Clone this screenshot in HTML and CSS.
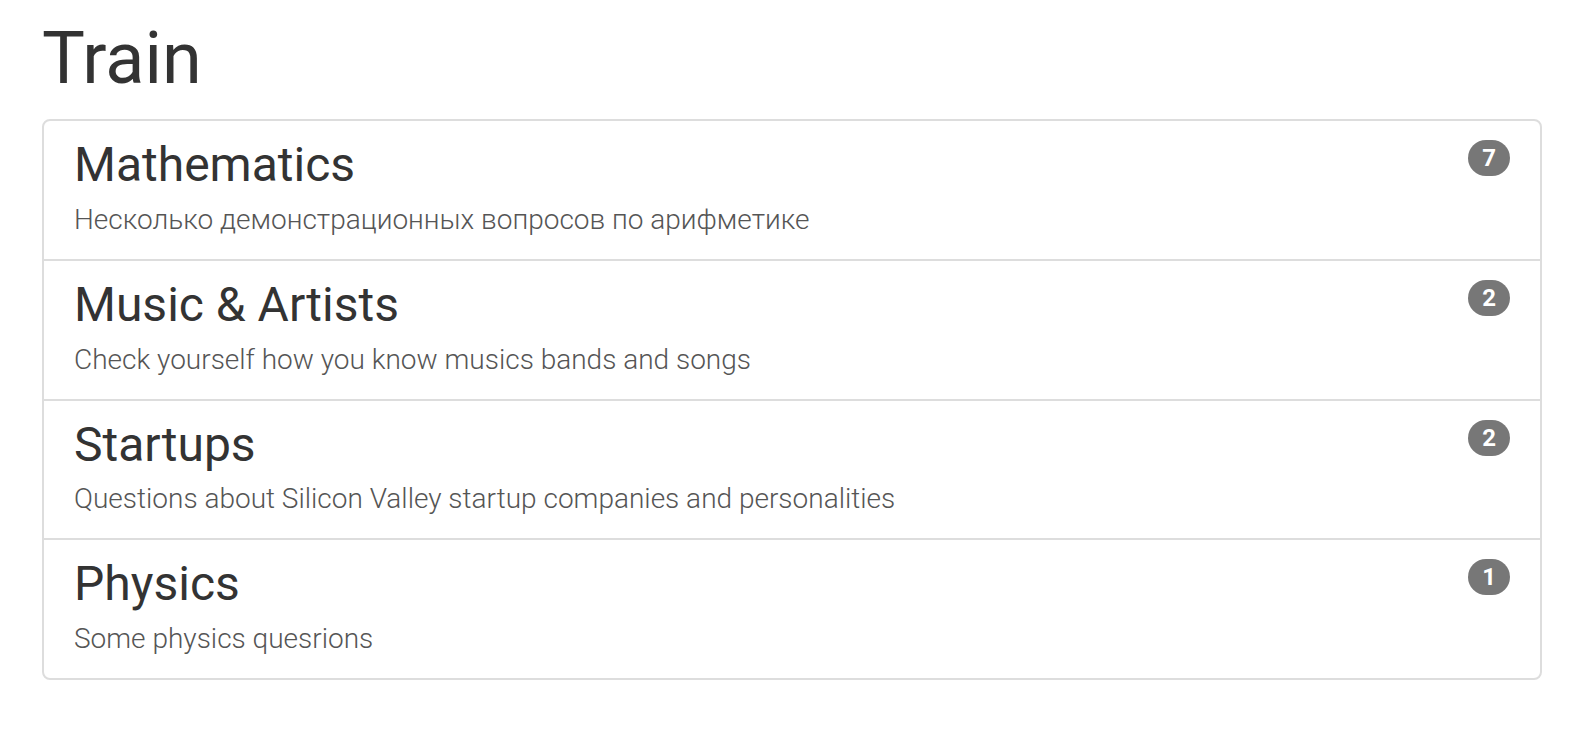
FILE: index.html
```html
<!DOCTYPE html>
<html lang="en">
<head>
<meta charset="utf-8">
<title>Train</title>
<link rel="stylesheet" href="styles.css">
</head>
<body>
<div class="page">
  <h1 class="page-title">Train</h1>
  <div class="list">
    <div class="item">
      <div class="item-head">
        <h3 class="item-title">Mathematics</h3>
        <span class="badge">7</span>
      </div>
      <p class="item-text">Несколько демонстрационных вопросов по арифметике</p>
    </div>
    <div class="item">
      <div class="item-head">
        <h3 class="item-title">Music &amp; Artists</h3>
        <span class="badge">2</span>
      </div>
      <p class="item-text">Check yourself how you know musics bands and songs</p>
    </div>
    <div class="item">
      <div class="item-head">
        <h3 class="item-title">Startups</h3>
        <span class="badge">2</span>
      </div>
      <p class="item-text">Questions about Silicon Valley startup companies and personalities</p>
    </div>
    <div class="item">
      <div class="item-head">
        <h3 class="item-title">Physics</h3>
        <span class="badge">1</span>
      </div>
      <p class="item-text">Some physics quesrions</p>
    </div>
  </div>
</div>
</body>
</html>
```

FILE: styles.css
```css
* { box-sizing: border-box; }
html, body { margin: 0; padding: 0; background: #fff; }
body {
  font-family: Roboto, "Noto Sans", "Liberation Sans", sans-serif;
  color: #333;
}
.page {
  padding: 19px 42px 0 42px;
}
.page-title {
  margin: 0 0 21px 0;
  font-size: 72px;
  font-weight: 400;
  line-height: 1.1;
  color: #333;
}
.list {
  border: 2px solid #ddd;
  border-radius: 8px;
  width: 1500px;
}
.item {
  padding: 18px 30px 20.5px 30px;
  border-top: 2px solid #ddd;
}
.item:first-child { border-top: none; }
.item-head {
  display: flex;
  justify-content: space-between;
  align-items: flex-start;
}
.item-title {
  margin: 0 0 10px 0;
  font-size: 48px;
  font-weight: 400;
  line-height: 1.1;
  color: #333;
}
.badge {
  margin-top: 1px;
  display: inline-block;
  min-width: 20px;
  padding: 6px 14px;
  font-size: 24px;
  font-weight: 700;
  line-height: 1;
  color: #fff;
  background: #777;
  border-radius: 20px;
  text-align: center;
}
.item-text {
  margin: 0;
  font-size: 28px;
  font-weight: 300;
  line-height: 1.3;
  color: #555;
}
```
